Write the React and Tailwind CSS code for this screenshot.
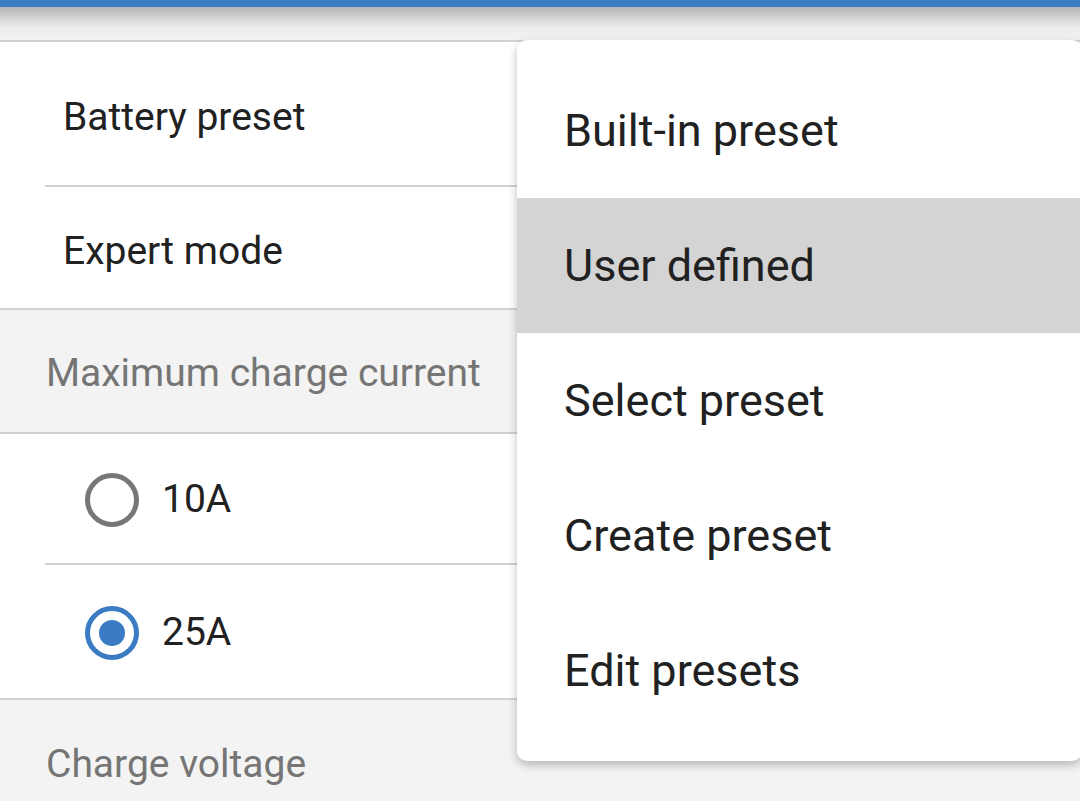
import React from 'react';

const menuItems = ['Built-in preset', 'User defined', 'Select preset', 'Create preset', 'Edit presets'];

function Radio({ checked }) {
  return (
    <svg width="58" height="58" viewBox="0 0 58 58">
      <circle cx="29" cy="29" r="24.5" fill="none" stroke={checked ? '#3a7bc4' : '#777777'} strokeWidth="5" />
      {checked && <circle cx="29" cy="29" r="13" fill="#3a7bc4" />}
    </svg>
  );
}

export default function App() {
  return (
    <div className="relative h-[801px] w-[1080px] overflow-hidden bg-[#f3f3f3] font-['Roboto',sans-serif]">
      {/* Top bar */}
      <div className="h-[7px] bg-[#3a7bc4]" />
      <div className="h-[33px] bg-gradient-to-b from-[#b4b4b4] via-[#ececec] via-60% to-[#f2f2f2]" />
      <div className="h-[2px] bg-[#d2d2d2]" />

      {/* Settings list */}
      <div className="bg-white">
        <div className="flex h-[143px] items-center pl-[63px] pt-[8px] text-[39px] text-[#212121]">Battery preset</div>
        <div className="ml-[45px] h-[2px] bg-[#d2d2d2]" />
        <div className="flex h-[121px] items-center pl-[63px] pt-[8px] text-[39px] text-[#212121]">Expert mode</div>
      </div>
      <div className="h-[2px] bg-[#d2d2d2]" />
      <div className="flex h-[122px] items-center pl-[46px] pt-[4px] text-[39px] text-[#757575]">Maximum charge current</div>
      <div className="h-[2px] bg-[#d2d2d2]" />
      <div className="bg-white">
        <div className="flex h-[129px] items-center gap-[21px] pl-[83px] pt-[2px] text-[39px] text-[#212121]">
          <Radio checked={false} />
          <span>10A</span>
        </div>
        <div className="ml-[45px] h-[2px] bg-[#d2d2d2]" />
        <div className="flex h-[133px] items-center gap-[21px] pl-[83px] pt-[2px] text-[39px] text-[#212121]">
          <Radio checked />
          <span>25A</span>
        </div>
      </div>
      <div className="h-[2px] bg-[#d2d2d2]" />
      <div className="flex h-[120px] items-center pl-[46px] pt-[8px] text-[39px] text-[#757575]">Charge voltage</div>

      {/* Dropdown menu */}
      <div className="absolute left-[517px] top-[40px] w-[565px] rounded-[10px] bg-white pb-[23px] pt-[23px] shadow-[0_4px_10px_rgba(0,0,0,0.25)]">
        {menuItems.map((item) => (
          <div
            key={item}
            className={`flex h-[135px] items-center pl-[47px] text-[45px] text-[#212121] ${item === 'User defined' ? 'bg-[#d4d4d4]' : ''}`}
          >
            {item}
          </div>
        ))}
      </div>
    </div>
  );
}
